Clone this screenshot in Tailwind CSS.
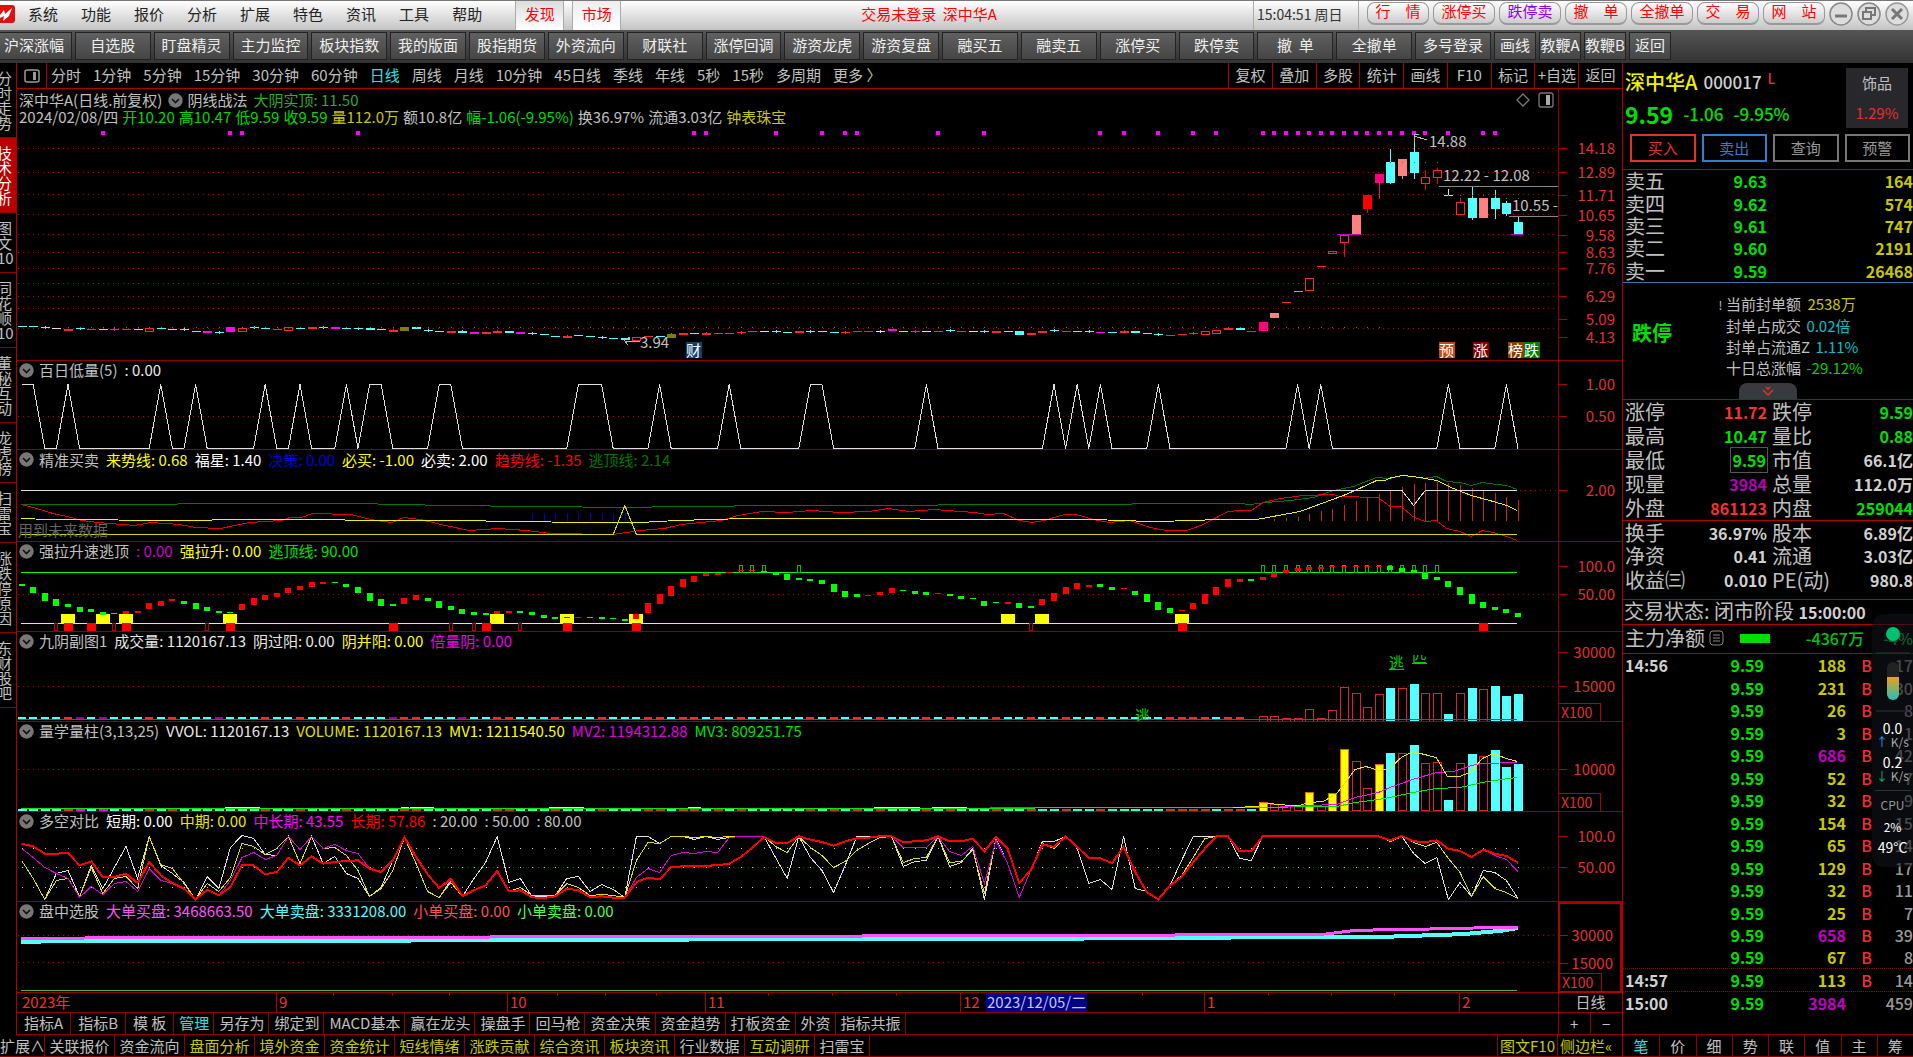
<!DOCTYPE html>
<html lang="zh-CN">
<head>
<meta charset="utf-8">
<title>深中华A 000017 日线</title>
<script src="https://cdn.jsdelivr.net/npm/@tailwindcss/browser@4"></script>
</head>
<body class="h-screen overflow-hidden bg-black text-[#c0c0c0] text-[15px] leading-5 font-['Noto_Sans_CJK_SC',sans-serif] flex flex-col whitespace-nowrap">

<!-- menu bar -->
<header class="h-[30px] shrink-0 flex items-center border-t border-[#777] bg-linear-to-b from-white to-[#c4c4c4] text-[#222] leading-[18px]">
  <svg class="w-[15px] h-[20px] mb-1 shrink-0" viewBox="0 0 15 20"><path d="M-4 1H12Q15 1 15 4V16Q15 19 12 19H-4Z" fill="#e01010"/><path d="M0 11L4 6L5 10L12 4L9 12L3 17L4 12L0 14Z" fill="#fff"/></svg>
  <nav class="ml-[13px] pb-1 flex gap-[23px]">
    <button>系统</button><button>功能</button><button>报价</button><button>分析</button><button>扩展</button><button>特色</button><button>资讯</button><button>工具</button><button>帮助</button>
  </nav>
  <div class="ml-[33px] h-full flex gap-2 text-[#f00]">
    <button class="w-[49px] h-full pb-1 border-x border-[#aaa] bg-linear-to-b from-[#ddd] to-white">发现</button>
    <button class="w-[49px] h-full pb-1 border-x border-[#aaa] bg-linear-to-b from-[#eee] to-white">市场</button>
  </div>
  <p class="flex-1 pb-1 pr-4 text-center text-[#f00] whitespace-pre">交易未登录  深中华A</p>
  <p class="w-[106px] h-full border-x border-[#aaa] pl-[3px] pt-1 text-sm leading-[18px] text-[#333]">15:04:51 周日</p>
  <div class="ml-2 pb-1 flex gap-1 text-[#f00]" id="trade"></div>
  <div class="ml-1 mr-1 pb-1 flex gap-1">
    <button aria-label="最小化"><svg class="size-6" viewBox="0 0 24 24" fill="none" stroke="#888" stroke-width="1.5"><circle cx="12" cy="12" r="11" fill="#ddd"/><path d="M6 14H18" stroke="#777" stroke-width="3"/></svg></button>
    <button aria-label="还原"><svg class="size-6" viewBox="0 0 24 24" fill="none" stroke="#888" stroke-width="1.5"><circle cx="12" cy="12" r="11" fill="#ddd"/><path d="M9 9V6H18V13H15M6 10H14V17H6Z" stroke="#777" stroke-width="2"/></svg></button>
    <button aria-label="关闭"><svg class="size-6" viewBox="0 0 24 24" fill="none" stroke="#999" stroke-width="1.5"><circle cx="12" cy="12" r="11" fill="#ddd"/><path d="M7 7L17 17M17 7L7 17" stroke="#777" stroke-width="3"/></svg></button>
  </div>
</header>

<!-- shortcut bar -->
<nav class="h-[33px] pb-[2px] shrink-0 flex items-center bg-linear-to-b from-[#555] to-[#333] text-[#eee] leading-6">
  <div id="shortcuts" class="-ml-1 w-[1498px] shrink-0 grid grid-cols-19"></div>
  <div id="shortcuts2" class="flex gap-[3px]"></div>
</nav>

<main class="flex-1 min-h-0 flex">
 <div class="flex-1 min-w-0 flex flex-col">
  <div class="flex-1 min-h-0 flex">
   <!-- side tabs -->
   <nav id="side" class="w-[17px] shrink-0 border-r border-[#b00000] overflow-hidden flex flex-col leading-[15px]"></nav>

   <div class="flex-1 min-w-0 flex flex-col">
    <!-- period bar -->
    <div class="h-[26px] shrink-0 border-b border-[#b00000] flex items-center leading-[18px]">
      <button class="w-[30px] h-full border-r border-[#b00000] flex items-center justify-center" aria-label="侧栏"><svg class="w-4 h-3.5" viewBox="0 0 16 14" fill="none" stroke="#999" stroke-width="1.5"><rect x="1" y="1" width="14" height="12" rx="2"/><rect x="9" y="3" width="3" height="8" fill="#999" stroke="none"/></svg></button>
      <div id="periods" class="ml-1 pb-[2px] flex gap-3"></div>
      <div id="tools" class="ml-auto w-[394px] h-full grid grid-cols-9"></div>
    </div>

    <!-- chart panels -->
    <div class="flex-1 min-h-0 grid grid-rows-[272fr_89fr_92fr_90fr_90fr_90fr_90fr_91fr]">
      <section class="flex min-h-0">
        <div class="relative flex-1 border-b border-[#900000]">
          <svg id="c1" class="absolute inset-0 w-full h-full" viewBox="17 89 1541 271" preserveAspectRatio="none" shape-rendering="crispEdges"></svg>
          <div id="c1t" class="absolute inset-0"></div>
          <div class="relative px-[2px] pt-[2px] flex items-center gap-[6px] leading-[18px]"><span>深中华A(日线.前复权)</span><i class="ind"></i><span>阴线战法</span><span class="text-[#30a830]">大阴实顶: 11.50</span>
            <svg class="ml-auto mr-[2px] w-[38px] h-4" viewBox="0 0 38 16" fill="none" stroke="#777" stroke-width="1.3"><path d="M7 2L13 8L7 14L1 8Z"/><rect x="23" y="1" width="14" height="14" rx="2"/><rect x="30" y="3" width="4" height="10" fill="#aaa" stroke="none"/></svg></div>
          <p class="relative px-[2px] flex gap-1 leading-4 text-[#00d800]"><span class="text-[#c0c0c0]">2024/02/08/四</span><span>开10.20</span><span>高10.47</span><span>低9.59</span><span>收9.59</span><span class="text-[#c8c800]">量112.0万</span><span class="text-[#c0c0c0]">额10.8亿</span><span>幅-1.06(-9.95%)</span><span class="text-[#c0c0c0]">换36.97%</span><span class="text-[#c0c0c0]">流通3.03亿</span><span class="text-[#c8c800]">钟表珠宝</span></p>
        </div>
        <div id="a1" class="relative w-[64px] shrink-0 border-l border-b border-[#900000]"></div>
      </section>
      <section class="flex min-h-0">
        <div class="relative flex-1 border-b border-[#900000]">
          <svg id="c2" class="absolute inset-0 w-full h-full" viewBox="17 361 1541 88" preserveAspectRatio="none" shape-rendering="crispEdges"></svg>
          <p class="relative px-[2px] flex items-center gap-[7px] leading-[18px]"><i class="ind"></i><span>百日低量(5)</span><span class="text-[#e8e8e8]">: 0.00</span></p>
        </div>
        <div id="a2" class="relative w-[64px] shrink-0 border-l border-b border-[#900000]"></div>
      </section>
      <section class="flex min-h-0">
        <div class="relative flex-1 border-b border-[#900000]">
          <svg id="c3" class="absolute inset-0 w-full h-full" viewBox="17 450 1541 91" preserveAspectRatio="none" shape-rendering="crispEdges"></svg>
          <p class="relative px-[2px] flex items-center gap-[7px] leading-[19px]"><i class="ind"></i><span>精准买卖</span><span class="text-[#ff0]">来势线: 0.68</span><span class="text-white">福星: 1.40</span><span class="text-[#0000e0]">决策: 0.00</span><span class="text-[#ff0]">必买: -1.00</span><span class="text-white">必卖: 2.00</span><span class="text-[#f00]">趋势线: -1.35</span><span class="text-[#007800]">逃顶线: 2.14</span></p>
          <p class="absolute left-[1px] bottom-[1px] text-[#666]">用到未来数据</p>
        </div>
        <div id="a3" class="relative w-[64px] shrink-0 border-l border-b border-[#900000]"></div>
      </section>
      <section class="flex min-h-0">
        <div class="relative flex-1 border-b border-[#900000]">
          <svg id="c4" class="absolute inset-0 w-full h-full" viewBox="17 542 1541 89" preserveAspectRatio="none" shape-rendering="crispEdges"></svg>
          <p class="relative px-[2px] flex items-center gap-[7px] leading-[18px]"><i class="ind"></i><span>强拉升速逃顶</span><span class="text-[#d000d0]">: 0.00</span><span class="text-[#ff0]">强拉升: 0.00</span><span class="text-[#00e000]">逃顶线: 90.00</span></p>
        </div>
        <div id="a4" class="relative w-[64px] shrink-0 border-l border-b border-[#900000]"></div>
      </section>
      <section class="flex min-h-0">
        <div class="relative flex-1 border-b border-[#900000]">
          <svg id="c5" class="absolute inset-0 w-full h-full" viewBox="17 632 1541 89" preserveAspectRatio="none" shape-rendering="crispEdges"></svg>
          <div id="c5t" class="absolute inset-0 overflow-hidden"></div>
          <p class="relative px-[2px] flex items-center gap-[7px] leading-[18px]"><i class="ind"></i><span>九阴副图1</span><span class="text-[#e8e8e8]">成交量: 1120167.13</span><span class="text-[#e8e8e8]">阴过阳: 0.00</span><span class="text-[#ff0]">阴并阳: 0.00</span><span class="text-[#e800e8]">倍量阴: 0.00</span></p>
        </div>
        <div id="a5" class="relative w-[64px] shrink-0 border-l border-b border-[#900000]"></div>
      </section>
      <section class="flex min-h-0">
        <div class="relative flex-1 border-b border-[#900000]">
          <svg id="c6" class="absolute inset-0 w-full h-full" viewBox="17 722 1541 89" preserveAspectRatio="none" shape-rendering="crispEdges"></svg>
          <p class="relative px-[2px] flex items-center gap-[7px] leading-[18px]"><i class="ind"></i><span>量学量柱(3,13,25)</span><span class="text-[#e8e8e8]">VVOL: 1120167.13</span><span class="text-[#e0e000]">VOLUME: 1120167.13</span><span class="text-[#ff0]">MV1: 1211540.50</span><span class="text-[#e000e0]">MV2: 1194312.88</span><span class="text-[#00e000]">MV3: 809251.75</span></p>
        </div>
        <div id="a6" class="relative w-[64px] shrink-0 border-l border-b border-[#900000]"></div>
      </section>
      <section class="flex min-h-0">
        <div class="relative flex-1 border-b border-[#900000]">
          <svg id="c7" class="absolute inset-0 w-full h-full" viewBox="17 812 1541 89" preserveAspectRatio="none" shape-rendering="crispEdges"></svg>
          <p class="relative px-[2px] flex items-center gap-[7px] leading-[18px]"><i class="ind"></i><span>多空对比</span><span class="text-white">短期: 0.00</span><span class="text-[#e8e800]">中期: 0.00</span><span class="text-[#f0f]">中长期: 43.55</span><span class="text-[#f00]">长期: 57.86</span><span>: 20.00</span><span>: 50.00</span><span>: 80.00</span></p>
        </div>
        <div id="a7" class="relative w-[64px] shrink-0 border-l border-b border-[#900000]"></div>
      </section>
      <section class="flex min-h-0">
        <div class="relative flex-1 border-b border-[#900000]">
          <svg id="c8" class="absolute inset-0 w-full h-full" viewBox="17 902 1541 90" preserveAspectRatio="none" shape-rendering="crispEdges"></svg>
          <p class="relative px-[2px] flex items-center gap-[7px] leading-[18px]"><i class="ind"></i><span>盘中选股</span><span class="text-[#ff50ff]">大单买盘: 3468663.50</span><span class="text-[#50ffff]">大单卖盘: 3331208.00</span><span class="text-[#ff5050]">小单买盘: 0.00</span><span class="text-[#50ff50]">小单卖盘: 0.00</span></p>
        </div>
        <div id="a8" class="relative w-[64px] shrink-0 border-2 border-[#b00000]"></div>
      </section>
    </div>

    <!-- time axis -->
    <div class="h-5 shrink-0 flex border-b border-[#900000]">
      <div id="dates" class="relative flex-1 overflow-hidden text-[#f03030]"></div>
      <p class="w-[64px] border-l border-[#900000] text-center leading-[18px]">日线</p>
    </div>
    <!-- template tabs -->
    <div class="h-[22px] shrink-0 flex border-b border-[#900000] leading-[18px]">
      <div id="tabs1" class="flex flex-1"></div>
      <div class="w-[64px] grid grid-cols-2 border-l border-[#900000]"><button class="border-r border-[#900000]">+</button><button>−</button></div>
    </div>
   </div>
  </div>
  <!-- extension tabs -->
  <div class="h-[22px] shrink-0 flex border-b border-[#900000] leading-[18px]">
    <button class="w-[45px] border-r border-[#900000] overflow-hidden text-left">扩展∧</button>
    <div id="tabs2" class="flex flex-1"></div>
    <button class="w-[61px] border-x border-[#900000] text-[#c8c800]">图文F10</button>
    <button class="w-[64px] text-[#c8c800] overflow-hidden text-left pl-[2px]">侧边栏«</button>
  </div>
 </div>

 <!-- quote panel -->
 <aside class="relative w-[291px] shrink-0 border-l border-[#b00000] flex flex-col overflow-hidden">
  <div class="h-[107px] shrink-0 border-b border-[#b00000] pl-[2px] pt-[5px]">
    <div class="flex justify-between pr-[5px]">
      <div>
        <h1 class="flex gap-[6px] text-xl leading-7 font-medium text-[#f0f000]">深中华A<span class="text-[17px] text-[#d0d0d0]">000017</span><span class="text-sm leading-5 text-[#f03030]">L</span></h1>
        <p class="mt-1 flex items-center gap-[10px] text-[17px] leading-7 font-medium text-[#00e000]"><b class="text-[23px]">9.59</b><span>-1.06</span><span>-9.95%</span></p>
      </div>
      <div class="w-[62px] h-[60px] bg-[#28282c] text-center leading-[30px]">饰品<p class="text-[#e03030]">1.29%</p></div>
    </div>
    <div class="mt-[6px] ml-[5px] mr-[3px] grid grid-cols-4 gap-[6px] leading-6">
      <button class="border-2 border-[#e03030] text-[#e03030]">买入</button><button class="border-2 border-[#3080d0] text-[#3080d0]">卖出</button><button class="border-2 border-[#777] text-[#999]">查询</button><button class="border-2 border-[#777] text-[#999]">预警</button>
    </div>
  </div>
  <table class="w-full table-fixed h-[113px] shrink-0 border-b border-[#3878b0]"><tbody id="asks"></tbody></table>
  <div class="relative h-[117px] shrink-0 border-b border-[#b00000] flex items-center">
    <b class="w-[92px] pl-[9px] pb-4 text-xl text-[#00e000]">跌停</b>
    <div class="leading-[21px] pb-3">
      <p class="text-[#c0c0c0]"><span class="inline-block w-[11px] text-xs leading-5 text-center">!</span>当前封单额 <span class="ml-[3px] text-[#c8c800]">2538万</span></p>
      <p class="pl-[11px]">封单占成交 <span class="ml-[2px] text-[#00c0d0]">0.02倍</span></p>
      <p class="pl-[11px]">封单占流通Z <span class="ml-[2px] text-[#00c0d0]">1.11%</span></p>
      <p class="pl-[11px]">十日总涨幅 <span class="ml-[2px] text-[#00d000]">-29.12%</span></p>
    </div>
    <button class="absolute left-[116px] bottom-0 w-[58px] h-4 rounded-t-lg bg-[#3a3a3e] flex items-center justify-center" aria-label="展开"><svg class="w-3 h-2.5" viewBox="0 0 12 10" fill="none" stroke="#e03030" stroke-width="1.6"><path d="M1 4L6 9L11 4M4 1L6 3L8 1"/></svg></button>
  </div>
  <table class="w-full table-fixed h-[121px] shrink-0 border-b border-[#b00000]"><tbody id="stat1"></tbody></table>
  <div class="h-[79px] shrink-0 border-b border-[#b00000]"><table class="w-full table-fixed h-[71px]"><tbody id="stat2"></tbody></table></div>
  <p class="h-[25px] shrink-0 border-b border-[#b00000] text-xl leading-[22px] pl-[1px]">交易状态: 闭市阶段 <b class="text-base leading-[22px] font-bold text-[#d0d0d0]">15:00:00</b></p>
  <div class="h-[29px] shrink-0 border-b border-[#b00000] pl-[2px] pb-[2px] flex items-center text-xl">主力净额
    <svg class="ml-1 w-[15px] h-4" viewBox="0 0 15 16" fill="none" stroke="#888"><rect x="1" y="1" width="13" height="14" rx="3"/><path d="M4 5H11M4 8H11M4 11H11"/></svg>
    <span class="ml-4 w-[30px] h-[9px] bg-[#00e000]"></span><span class="flex-1 text-right pr-[49px] text-base font-medium text-[#00c800]">-4367万</span><span class="absolute right-0 text-base font-medium text-[#00d050]">-4%</span></div>
  <table class="w-full table-fixed shrink-0 border-collapse"><tbody id="ticks"></tbody></table>
  <nav id="qtabs" class="mt-auto h-[23px] shrink-0 grid grid-cols-8 border-y border-[#900000] leading-[18px]"></nav>

  <!-- floating system monitor -->
  <div class="absolute right-0 top-[551px] w-[41px] h-[253px] rounded-l-xl bg-[#101218]/60 flex flex-col items-center text-sm leading-4 text-white">
    <svg class="w-10 h-[98px] shrink-0" viewBox="0 0 40 98"><defs><linearGradient id="bat" x2="0" y2="1"><stop offset="0" stop-color="#f0a010"/><stop offset="1" stop-color="#20c0c0"/></linearGradient></defs><circle cx="20" cy="20" r="7" fill="#00c070"/><path d="M3 39H37M3 97H37" stroke="#333"/><rect x="14" y="48" width="12" height="38" rx="6" fill="#222"/><path d="M14 63H26V80A6 6 0 0 1 14 80Z" fill="url(#bat)"/></svg>
    <span class="mt-2">0.0</span><span class="text-xs leading-3 text-[#aaa]"><span class="text-[#20a0ff]">↑</span> K/s</span>
    <span class="mt-[6px]">0.2</span><span class="text-xs leading-3 text-[#aaa]"><span class="text-[#00c070]">↓</span> K/s</span>
    <span class="mt-2 w-9 border-t border-[#333]"></span><span class="mt-[6px] text-xs text-[#999]">CPU</span><span class="mt-[6px] text-xs">2%</span><span class="mt-1 text-sm leading-4">49°C</span>
  </div>
 </aside>
</main>

<script>
const $ = id => document.getElementById(id);
const each = (id, list, fn) => { $(id).innerHTML = list.map(fn).join(''); };

document.querySelectorAll('.ind').forEach(e => {
  e.outerHTML = '<svg class="-mr-[2px] size-[15px] shrink-0" viewBox="0 0 15 15"><circle cx="7.5" cy="7.5" r="7.2" fill="#777"/><path d="M4 6L7.5 9.5L11 6" fill="none" stroke="#111" stroke-width="1.6"/></svg>';
});
each('trade', ['行　情','涨停买','跌停卖','撤　单','全撤单','交　易','网　站'], t =>
  `<button class="w-[62px] h-[23px] leading-4 pb-1 rounded-lg border border-[#999] border-b-2 bg-linear-to-b from-white to-[#ccc] ${t === '跌停卖' ? 'text-[#9000f0]' : ''}">${t}</button>`);
each('shortcuts', ['沪深涨幅','自选股','盯盘精灵','主力监控','板块指数','我的版面','股指期货','外资流向','财联社','涨停回调','游资龙虎','游资复盘','融买五','融卖五','涨停买','跌停卖','撤&nbsp;&nbsp;单','全撤单','多号登录'], t =>
  `<button class="mr-[3px] h-[28px] pb-[2px] border border-[#222] bg-linear-to-b from-[#606060] to-[#454545]">${t}</button>`);
each('shortcuts2', ['画线','教鞭A','教鞭B','返回'], t =>
  `<button class="w-[42px] h-[28px] pb-[2px] overflow-hidden border border-[#222] bg-linear-to-b from-[#606060] to-[#454545]">${t}</button>`);
each('side', [['分时走势',0],['技术分析',1],['图文<br>10',0],['同花顺<br>10',0],['董秘互动',0],['龙虎榜',0],['扫雷宝',0],['涨跌停原因',0],['东财股吧',0]], ([t, on]) =>
  `<button class="shrink-0 border-b border-[#900000] ${t.length > 4 && !t.includes('图') ? (t.length === 5 ? 'h-[90px]' : 'h-[75px]') : (t.length === 4 ? 'h-[75px]' : 'h-[60px]')} ${on ? 'bg-[#b80000] text-white' : ''}"><span class="block w-[15px] -ml-[3px] whitespace-normal break-all">${t.replace('10','<span class="whitespace-nowrap">10</span>')}</span></button>`);
each('periods', ['分时','1分钟','5分钟','15分钟','30分钟','60分钟','日线','周线','月线','10分钟','45日线','季线','年线','5秒','15秒','多周期','更多 〉'], t =>
  `<button class="${t === '日线' ? 'text-[#30e0e0]' : ''}">${t}</button>`);
each('tools', ['复权','叠加','多股','统计','画线','F10','标记','+自选','返回'], t => `<button class="border-l border-[#b00000] pb-[2px]">${t}</button>`);
each('tabs1', ['指标A','指标B','模 板','管理','另存为','绑定到','MACD基本','赢在龙头','操盘手','回马枪','资金决策','资金趋势','打板资金','外资','指标共振'], (t, i) =>
  `<button class="border-r border-[#900000] pb-[2px] ${i < 3 ? 'px-[7px]' : 'pl-[5px] pr-1'} ${t === '管理' ? 'text-[#30e0e0]' : ''}">${t}</button>`);
each('tabs2', ['关联报价','资金流向','*盘面分析','*境外资金','*资金统计','*短线情绪','*涨跌贡献','*综合资讯','*板块资讯','行业数据','*互动调研','扫雷宝'], t =>
  `<button class="border-r border-[#900000] ${t === '扫雷宝' ? 'w-[55px]' : 'w-[70px]'} ${t[0] === '*' ? 'text-[#c8c800]' : ''}">${t.replace('*','')}</button>`);
each('qtabs', ['笔','价','细','势','联','值','主','筹'], (t, i) => `<button class="${i ? 'border-l border-[#900000]' : 'text-[#30e0e0]'}">${t}</button>`);

/* quote tables */
each('asks', [['五','9.63',164],['四','9.62',574],['三','9.61',747],['二','9.60',2191],['一','9.59',26468]], r =>
  `<tr><th class="w-[72px] pl-[2px] text-left text-xl leading-[22px] font-normal">卖${r[0]}</th><td class="w-[72px] text-right text-base leading-[22px] font-bold text-[#00e000]">${r[1]}</td><td class="text-right text-base leading-[22px] font-bold text-[#c8c800]">${r[2]}</td></tr>`);
const G = 'text-[#00e000]', R = 'text-[#f83030]', M = 'text-[#b800b8]', W = 'text-[#d0d0d0]';
const stat = r => `<tr><th class="w-[64px] pl-[2px] text-left text-xl leading-[22px] font-normal">${r[0]}</th><td class="w-[80px] text-right text-base leading-[22px] font-bold ${r[2]}">${r[0] === '最低' ? '<span class="outline outline-[#555] px-[1px]">9.59</span>' : r[1]}</td><th class="w-[62px] pl-[5px] text-left text-xl leading-[22px] font-normal">${r[3]}</th><td class="text-right text-base leading-[22px] font-bold ${r[5]}">${r[4]}</td></tr>`;
each('stat1', [['涨停','11.72',R,'跌停','9.59',G],['最高','10.47',G,'量比','0.88',G],['最低','9.59',G,'市值','66.1亿',W],['现量','3984',M,'总量','112.0万',W],['外盘','861123',R,'内盘','259044',G]], stat);
each('stat2', [['换手','36.97%',W,'股本','6.89亿',W],['净资','0.41',W,'流通','3.03亿',W],['收益㈢','0.010',W,'PE(动)','980.8',W]], stat);
each('ticks', [['14:56',188,17],['',231,30],['',26,8],['',3,1],['',686,42],['',52,7],['',32,9],['',154,15],['',65,14],['',129,17],['',32,11],['',25,7],['',658,39],['',67,8],['14:57',113,14],['15:00',3984,459]], (r, i) =>
  `<tr class="text-base ${i % 2 || i > 11 ? 'leading-[22px]' : 'leading-[23px]'} font-bold ${i > 13 ? 'border-t border-dotted border-[#900000]' : ''}"><td class="w-[61px] pl-[2px] p-0 text-[#d0d0d0]">${r[0]}</td><td class="w-[80px] p-0 text-right text-[#00e000]">9.59</td><td class="w-[82px] p-0 text-right ${r[1] > 500 ? 'text-[#c000c0]' : 'text-[#c8c800]'}">${r[1]}</td><td class="w-[26px] p-0 text-right font-medium text-[#f03030]">${r[1] === 3984 ? '' : 'B'}</td><td class="p-0 text-right font-medium text-[#999]">${r[2]}</td></tr>`);

/* chart helpers: one bar every 11.6 units */
const X = i => 21.6 + 11.6 * i;
const line = (pts, c, w = 1) => `<polyline points="${pts.map(([x, y]) => x + ',' + (w === 1 ? Math.floor(y) + .5 : y)).join(' ')}" fill="none" stroke="${c}" stroke-width="${w}"/>`;
const rect = (x, y, w, h, c) => `<rect x="${Math.round(x)}" y="${Math.round(y)}" width="${w}" height="${Math.max(1, Math.round(h))}" fill="${c}"/>`;
const hollow = (x, y, w, h, c) => `<rect x="${Math.round(x) + .5}" y="${Math.round(y) + .5}" width="${w - 1}" height="${Math.max(1, Math.round(h) - 1)}" fill="none" stroke="${c}"/>`;
const dots = (y, x1 = 18, x2 = 1556) => `<path d="M${x1} ${Math.floor(y) + .5}H${x2}" stroke="#b80000" stroke-dasharray="1 4"/>`;
const pts = (off, sc, yb, s) => s.trim().split(' ').map(p => { const [x, y] = p.split(','); return [off + x / sc, +y + yb]; });
const C = { c: '#54ffff', r: '#ff2828', m: '#f0f', w: '#ddd', o: '#808000', g: '#0f0', s: '#ff8080', h: '#ff0080', y: '#ff0' };

/* axis labels */
const axis = (id, top, h, labels, box) => {
  $(id).innerHTML = labels.map(([t, y]) => `<span class="absolute left-0 w-2 border-t border-[#b00000]" style="top:${(y - top) / h * 100}%"></span><span class="absolute right-[7px] -translate-y-1/2 text-[#e03030]" style="top:${(y - top) / h * 100}%">${t}</span>`).join('') +
    (box ? '<span class="absolute left-0 bottom-0 w-[42px] h-[18px] border border-b-0 border-l-0 border-[#b00000] pl-[2px] text-sm leading-4 text-[#e03030]">X100</span>' : '');
};
axis('a1', 89, 271, [['14.18',148],['12.89',172],['11.71',195],['10.65',215],['9.58',235],['8.63',252],['7.76',268],['6.29',296],['5.09',319],['4.13',337]]);
axis('a2', 361, 88, [['1.00',384],['0.50',416]]);
axis('a3', 450, 91, [['2.00',490]]);
axis('a4', 542, 89, [['100.0',566],['50.00',594]]);
axis('a5', 632, 89, [['30000',652],['15000',686]], 1);
axis('a6', 722, 89, [['10000',769]], 1);
axis('a7', 812, 89, [['100.0',836],['50.00',867]]);
axis('a8', 904, 86, [['30000',935],['15000',962]], 1);

/* 1: candles */
{
  let s = [148,172,194,214,234,252,268,283,296,308,328].map(y => dots(y)).join('');
  const flat = 'c326 c326 c327 w328 R329 c328 r329 c329 m329 r329 c329 H328 c328 c329 c329 c331 M331 c332 B327 H328 c327 c328 m329 H327 c328 R327 c327 M327 c328 c328 C328 c329 R330 O327 C327 c330 c331 R331 C331 M332 R332 R331 C331 M332 c333 c334 c336 R336 c335 c336 c337 c338 C338 H337 r336 c336 O334 R333 c333 R333 r333 m333 r332 m331 w331 c331 c332 R331 c331 c331 c332 r332 m331 r331 w331 M329 c331 m331 w331 r331 c330 m331 w331 c331 R331 c331 D331 R333 R331 c330 r331 c331 c331 m332 c332 R331 C331 c333 c334 m335 r334 r333 H331 H330 R328 C328 r331'.split(' ');
  flat.forEach((f, i) => {
    const k = f[0], y = +f.slice(1), x = X(i) - 4;
    if (k === 'H') s += hollow(x, y, 9, 4, '#ff2828');
    else if (k === 'B') s += rect(x, y, 9, 5, '#f0f');
    else if (k === 'D') s += rect(x, y, 9, 4, C.c);
    else s += rect(x, y, 9, k === 'O' ? 4 : k < 'a' ? 2 : 1, C[k.toLowerCase()]) + (i % 3 === 2 ? rect(x + 4, y - 1, 1, 3, C[k.toLowerCase()]) : '');
  });
  [[107,'h',322,331],[108,'s',313,318],[109,'r',302,303],[110,'s',291,292],[111,'H',278,291],[112,'r',266,267],[113,'H',251,254],[114,'H',235,243,235,257],[115,'s',215,235],[116,'R',195,209,195,213],[117,'h',174,183,174,199],[118,'c',162,183,149,184],[119,'s',159,176,159,179],[120,'c',152,173,133,179],[121,'H',177,184,170,190],[122,'H',170,178,168,184],[123,'w',195,195,189,195],[124,'H',202,215,198,215],[125,'c',198,218,187,220],[126,'s',198,218],[127,'c',198,209,190,219],[128,'c',203,214,201,216],[129,'c',222,235,216,235]].forEach(([i, k, t, b, lo, hi]) => {
    const c = k === 'H' || k === 'R' ? '#ff0000' : C[k];
    if (k === 'H') s += (lo && t > lo ? rect(X(i), lo, 1, t - lo, c) : '') + (lo && hi > b ? rect(X(i), b, 1, hi - b, c) : '') + hollow(X(i) - 4, t, 9, b - t, '#ff2828');
    else s += (lo ? rect(X(i), lo, 1, hi - lo, c) : '') + rect(X(i) - 4, t, 9, b - t, c);
  });
  [7,18,19,29,58,59,65,69,71,72,79,83,93,95,98,101,103,...Array.from({length: 15}, (_, k) => 107 + k),123,126,127].forEach(i => s += rect(X(i) - 2, 131, 4, 4, '#f0f'));
  for (let i = 4; i < 130; i++) s += rect(X(i), i < 118 ? 327 : i < 123 ? 162 : i < 128 ? 195 : 198, 1, 1, '#20a020');
  s += rect(1337, 234, 25, 1, '#c000c0') + rect(1511, 234, 13, 1, '#c000c0') + rect(1439, 186, 119, 1, '#888') + rect(1509, 216, 49, 1, '#888');
  s += '<path d="M640 341H625M630 337L624 340L628 345M1427 140L1414 136M1414 142V134H1419" fill="none" stroke="#bbb"/>';
  $('c1').innerHTML = s;
  const at = (x, y, cls, t) => `<span class="absolute leading-4 ${cls}" style="left:${(x - 17) / 1541 * 100}%;top:${(y - 89) / 271 * 100}%">${t}</span>`;
  $('c1t').innerHTML = at(640, 334, '', '3.94') + at(1429, 133, '', '14.88') + at(1443, 167, '', '12.22 - 12.08') + at(1512, 197, '', '10.55 -') +
    at(686, 342, 'w-4 bg-[#104070] text-white', '财') + at(1439, 342, 'w-4 bg-[#c04810] text-white', '预') + at(1473, 342, 'w-4 bg-[#800000] text-white', '涨') + at(1508, 342, 'w-4 bg-[#884000] text-white', '榜') + at(1524, 342, 'w-4 bg-[#008000] text-white', '跌');
}
/* 2: low-volume flag */
{
  const up = new Set([0,1,4,12,15,21,24,28,30,31,36,37,48,49,50,55,61,68,69,78,89,91,93,98,110,112,123,128]);
  $('c2').innerHTML = dots(416) + line(Array.from({length: 130}, (_, i) => [X(i), up.has(i) ? 384 : 448]), '#e0e0e0');
}
/* 3: trend lines */
{
  let s = dots(490, 1520);
  const P = (a, b, c) => [...pts(0, 2.45, 0, a), ...pts(640, 2.45, 0, b), ...pts(1240, 3, 0, c)];
  [519,518,517,514,511,509,505,501,497,494,491,487,484,483,482,483,485,488,490,493,497,500].forEach((y, k) => s += rect(X(108 + k), y, 1, 521 - y, '#d02020'));
  for (let i = 44; i < 53; i++) s += rect(X(i), 513, 1, 8, '#0000d0');
  s += line(P('52,504 820,503 1030,504 1050,505 1350,506 1500,507','0,507 60,506 400,505 430,505 1040,504 1370,503','0,503.5 30,504.5 80,502 150,500 220,497 280,490.5 340,486 410,477 450,478.5 484,475 520,476 550,478 589,476 620,481 660,482 694,485 727,482 770,484 800,485 832,489'), '#007800');
  s += line(P('52,504.7 90,508 130,513 165,516 200,520 240,522 330,525 370,522 440,524 480,527 540,528.5 610,522.5 690,520 710,517 740,517 765,513.5 860,514.5 920,520 960,522 990,517 1030,519 1080,524 1150,530 1220,528 1290,530 1350,533.5 1500,534','0,530 60,528 100,524 200,520 240,515 300,511 360,512 420,510 490,512.5 560,511 610,508.5 660,511 720,509.5 820,512.5 850,514.5 890,513.5 930,520 960,522 990,520 1040,514.5 1070,514.5 1110,519 1150,522 1200,520 1250,527 1290,530 1340,530 1380,524 1440,511','0,510 34,510 70,502.5 120,498 190,495 280,494.5 300,496 415,497 450,506 484,506 518,516 555,521 589,520 620,528 660,531 694,536 727,530 760,532 800,536 832,540'), '#e80000');
  s += line(P('52,518 120,519 460,520 580,519 1110,520 1430,522','0,522 90,520 260,518 680,518 690,519 1110,519 1250,521 1370,520 1400,519','0,519 50,519 180,511 310,495 345,490 410,480 435,480 455,477.5 490,475.5 540,477 590,480 640,488 694,495 760,501 800,505 832,510'), '#f0f000');
  s += line([[21,490],[X(119),490],[X(120),505],[X(121),490],[1517,490]], '#ddd') + line([[21,534],[X(51),534],[X(52),505],[X(53),534],[1517,534]], '#d8d800');
  $('c3').innerHTML = s;
}
/* 4: momentum blocks; each entry is colour, top, bottom in thirds of a pixel */
{
  const d = 'g703-709 g711-728 g729-754 g748-770 g763-773 g770-785 g778-788 g786-796 g789-792 r782-792 r782-788 r759-777 r752-766 r748-753 g752-762 g759-777 g771-784 g782-788 g786-790 r763-782 r744-766 r735-751 r729-740 r714-729 r707-720 r696-710 r695-701 g695-699 g703-713 g711-728 g729-754 g748-769 g763-769 r744-762 r736-750 g744-754 g752-773 g767-780 g778-792 g786-796 g789-795 r782-792 r783-788 g782-788 g786-795 g794-803 g800-806 r800-803 r800-803 g801-803 g801-807 g805-809 g807-814 r793-808 r759-788 r733-762 r707-736 r688-713 r677-694 r670-680 r669-675 r666-669 r660-664 r660-664 g662-667 g668-675 g673-690 g684-690 g688-695 g691-702 g703-728 g722-740 g733-743 r736-739 r726-735 r714-728 g721-725 g722-731 g726-735 r729-732 g733-740 g737-747 g744-747 g752-766 g756-759 r756-762 g759-773 g767-773 r748-766 r730-754 r711-732 r699-717 r704-710 g703-713 g711-720 r714-717 g722-735 g733-758 g756-781 g774-788 r781-784 r759-777 r733-762 r711-735 r688-713 r688-697 g688-694 r681-690 r670-683 r661-670 r654-664 r650-660 r650-657 r648-652 r648-652 r648-650 r648-650 r648-650 g648-660 g654-666 g661-670 g668-686 g681-690 g692-710 g711-735 g733-762 g756-773 g771-780 g778-791 g790-803'.split(' ');
  let s = dots(594) + rect(21, 572, 1496, 1, '#0f0') + rect(21, 623, 1496, 1, '#ff0');
  [62,63,64,67,...Array.from({length: 16}, (_, k) => 107 + k)].forEach(i => s += hollow(X(i) - 2, 565, 4, 8, '#00c000'));
  [4,7,9,18,41,47,53,85,88,100].forEach(i => s += rect(X(i) - 7, 614, 14, 10, '#ff0'));
  [4,6,9,18,32,40,47,53,100,126].forEach(i => s += rect(X(i) - 4, 623, 9, 8, '#f00'));
  [3,8,16,37,39,43,87].forEach(i => s += hollow(X(i) - 2, 623, 4, 8, '#c00000'));
  d.forEach((t, i) => { const [a, b] = t.slice(1).split('-'); s += rect(X(i) - 3, 350 + a / 3, 6, (b - a) / 3, t[0] === 'g' ? '#0f0' : '#f00'); });
  $('c4').innerHTML = s;
}
/* 5 and 6: volume */
{
  const low = 'ccccrmcmcccrcrcccmcccrccrcccrcccmrrcccmccrrcccrcccrcccrrcrrcrcrcccccrcrcrcrcccrcrcccrccrccrccrcccccrrrrcrr';
  const cyan = new Set([118,120,123,125,127,128,129]);
  const t5 = [716,716,718,718,709,718,710,687,693,707,694,688,688,684,693,693,714,693,688,689,686,696,694];
  const t6 = [802,804,806,806,792,806,793,749,761,788,764,753,753,745,763,762,800,763,754,756,750,767,764];
  const yellow = new Set([107,111,113,114,117]);
  let s = dots(686), v = dots(769);
  for (let i = 0; i < 107; i++) {
    const c = C[low[i]];
    s += rect(X(i) - 4, 717, 8, 2, c === '#f0f' ? '#a000a0' : c);
    v += rect(X(i) - 4, 809, 9, 2, i < 11 ? c : c === '#ff2828' ? '#c04020' : '#40ffb0');
  }
  t5.forEach((top5, n) => {
    const i = 107 + n, x = X(i) - 4, top6 = t6[n];
    s += cyan.has(i) ? rect(x, top5, 9, 721 - top5, C.c) : hollow(x, top5, 9, 723 - top5, '#d82424');
    v += yellow.has(i) ? rect(x, top6, 9, 811 - top6, '#ff0') + hollow(x, top6, 9, 813 - top6, '#f06000') : cyan.has(i) ? rect(x, top6, 9, 811 - top6, C.c) : hollow(x, top6, 9, 811 - top6, '#d82424');
  });
  s += rect(18, 719, 1499, 1, '#d000d0');
  [[225,35],[401,8],[410,24],[549,35],[688,13],[874,46],[932,35],[1222,24]].forEach(([x, w]) => v += rect(x, 807, w, 1, '#ff0'));
  v += rect(990, 807, 47, 1, '#f0f') + line([[21,808.5],[1030,808.5],[1040,807.5],...pts(1240, 3, 0, '0,807.5 290,806 345,802 415,799 450,797 518,792 589,788 660,787 727,782 761,780 832,777')], '#00e800') +
    line(pts(1240, 3, 0, '120,806 290,804 345,797 415,792 450,787 518,779 589,772 640,771 694,765 727,763 832,762.5'), '#f0f') +
    line(pts(1240, 3, 0, '-20,807 50,806 85,803 150,805 180,805 205,802 250,801 290,793 325,778 345,769 378,766 415,770 445,769 484,757 518,751 589,757 622,776 660,776 694,771 727,758 761,753 799,758 832,761'), '#e8e800');
  $('c5').innerHTML = s; $('c6').innerHTML = v;
  const at = (x, y, cls, t) => `<span class="absolute overflow-hidden underline text-[#00d000] ${cls}" style="left:${(x - 17) / 1541 * 100}%;top:${(y - 632) / 89 * 100}%">${t}</span>`;
  $('c5t').innerHTML = at(1389, 654, 'h-[18px] leading-4', '逃') + at(1412, 655, 'h-[9px] leading-[2px]', '匹') + at(1135, 707, 'h-4 leading-4', '逃');
}
/* 7: long/short comparison */
{
  const F = n => Array(n).fill(418);
  const red = [440,448,470,470,468,505,493,540,540,530,558,495,535,558,575,607,578,595,570,505,505,532,525,482,505,478,500,495,492,490,515,525,490,420,480,532,573,545,597,580,565,522,583,580,601,603,598,575,580,600,598,602,602,555,542,547,510,508,506,506,505,500,480,452,420,437,438,418,428,435,446,433,424,422,418,418,435,433,430,418,433,433,425,463,420,455,557,520,442,450,418,450,482,484,498,450,525,585,607,565,540,495,455,418,418,463,463,...F(11),430,417,433,435,430,455,462,480,458,470,477,497];
  const white = [490,545,607,530,520,598,505,575,510,448,545,418,505,530,555,607,538,575,452,415,425,472,475,418,500,418,498,478,528,545,597,570,490,420,500,583,600,550,597,545,495,418,555,545,598,598,595,543,537,582,562,578,600,418,418,440,418,418,427,419,427,420,418,418,418,480,545,418,480,520,585,505,418,418,418,418,508,492,490,418,508,495,455,607,425,500,600,520,432,432,418,455,558,548,577,418,575,583,607,565,490,418,418,418,418,485,490,...F(11),433,418,470,500,480,607,555,597,520,525,550,605];
  const yel = [490,545,607,550,545,598,510,590,545,537,575,418,503,515,560,607,560,583,540,438,448,472,455,418,500,418,455,452,475,520,597,575,520,420,500,583,600,555,597,580,565,522,583,570,595,595,595,560,570,595,593,595,600,490,435,438,418,418,422,418,422,418,418,418,418,448,465,418,450,475,510,492,460,440,422,418,495,483,482,418,495,492,460,590,425,455,557,520,440,455,418,450,482,484,498,450,525,585,607,565,535,480,425,418,418,463,463,...F(11),433,418,437,447,435,485,525,597,537,575,587,605];
  const mag = red.slice();
  [455,480,510,530,545,600,568,593,560,552,583,513,550,560,575,607,578,595,550,480,465,487,475,418,458,418,455,443,460,470,515].forEach((y, i) => mag[i] = y);
  Object.entries({37:550,53:540,54:515,55:525,56:475,57:467,58:469,59:463,60:465,61:420,62:418,63:418,64:418,76:450,77:452,78:452,79:418,80:462,81:475,82:448,83:560,84:430,85:500,86:600,127:475,128:487,129:523}).forEach(([i, y]) => mag[i] = y);
  const L = (a, c, w) => line(a.map((y, i) => [X(i), 697 + y / 3]), c, w);
  let s = dots(867);
  for (let i = 0; i < 130; i++) s += rect(X(i), 848, 1, 1, '#ccc') + rect(X(i), 867, 1, 1, '#ccc') + rect(X(i), 887, 1, 1, '#ccc');
  $('c7').innerHTML = s + L(white, '#e0e0e0', 1) + L(yel, '#e0e000', 1) + L(mag, '#d800d8', 1) + L(red, '#f00', 2);
}
/* 8: large orders */
$('c8').innerHTML = dots(935) + dots(962) + rect(21, 990, 1496, 1, '#60b030') +
  line([[21,942],[40,942],[41,941],[410,941],[411,940],[688,940],[690,939],[1083,939],[1084,938],[1383,937],[1405,936],[1440,935],[1465,934],[1487,932],[1500,931],[1518,928]], '#54ffff', 4) +
  line([[21,939],[85,938],[490,937],[862,936],[1175,935],[1326,934],[1350,931],[1373,930],[1430,929],[1518,927]], '#ff50ff', 3);
/* dates */
each('dates', [[22,'2023年'],[276,'9'],[507,'10'],[705,'11'],[960,'12'],[1204,'1'],[1459,'2']], ([x, t]) =>
  `<span class="absolute inset-y-0 leading-[18px] ${x > 22 ? 'border-l border-[#b00000] pl-[2px]' : ''}" style="left:${(x - 17) / 1541 * 100}%">${t}</span>`);
$('dates').innerHTML += `<span class="absolute inset-y-0 px-[1px] leading-[18px] bg-[#000088] text-[#c8c8e8]" style="left:${(986 - 17) / 1541 * 100}%">2023/12/05/二</span>` +
  [333,392,449,557,605,656,768,832,896,1142,1268,1331,1394].map(x => `<span class="absolute top-0 h-[3px] border-l border-[#b00000]" style="left:${(x - 17) / 1541 * 100}%"></span>`).join('');
</script>
</body>
</html>
